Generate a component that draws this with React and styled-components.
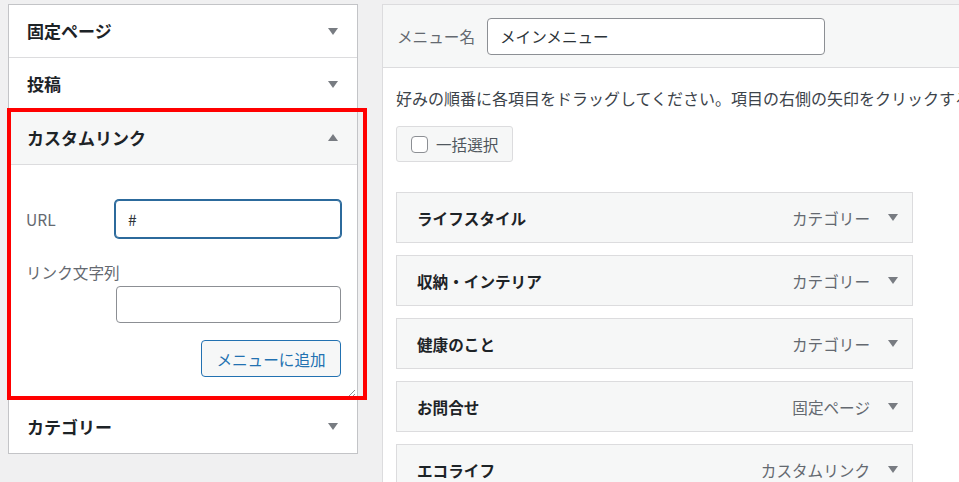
import { createGlobalStyle, styled } from "styled-components";

const leftSections = [
    { title: "固定ページ" },
    { title: "投稿" },
];

const menuItems = [
    { title: "ライフスタイル", type: "カテゴリー" },
    { title: "収納・インテリア", type: "カテゴリー" },
    { title: "健康のこと", type: "カテゴリー" },
    { title: "お問合せ", type: "固定ページ" },
    { title: "エコライフ", type: "カスタムリンク" },
];

const Arrow = ({ up }) => (
    <ArrowIcon viewBox="0 0 10 7" $up={up}>
        <path d="M0 0 L10 0 L5 7 Z" fill="currentColor" />
    </ArrowIcon>
);

const App = () => {
    return (
        <>
            <GlobalStyle />
            <Page>
                <LeftColumn>
                    <Accordion>
                        {leftSections.map((s) => (
                            <SectionHeader key={s.title}>
                                <SectionTitle>{s.title}</SectionTitle>
                                <Arrow />
                            </SectionHeader>
                        ))}
                        <SectionHeader $open>
                            <SectionTitle>カスタムリンク</SectionTitle>
                            <Arrow up />
                        </SectionHeader>
                        <SectionBody>
                            <FieldRow>
                                <FieldLabel>URL</FieldLabel>
                                <TextInput $focused defaultValue="#" />
                            </FieldRow>
                            <StackedField>
                                <FieldLabel>リンク文字列</FieldLabel>
                                <TextInput $indent />
                            </StackedField>
                            <ButtonRow>
                                <AddButton>メニューに追加</AddButton>
                            </ButtonRow>
                            <ResizeGrip viewBox="0 0 10 10">
                                <path d="M2 9 L9 2 M6 9 L9 6" stroke="#8c8f94" strokeWidth="1" />
                            </ResizeGrip>
                        </SectionBody>
                        <SectionHeader $last>
                            <SectionTitle>カテゴリー</SectionTitle>
                            <Arrow />
                        </SectionHeader>
                    </Accordion>
                    <Highlight />
                </LeftColumn>

                <RightColumn>
                    <MenuHeader>
                        <NameLabel>メニュー名</NameLabel>
                        <NameInput defaultValue="メインメニュー" />
                    </MenuHeader>
                    <MenuBody>
                        <Description>
                            好みの順番に各項目をドラッグしてください。項目の右側の矢印をクリックすると、追加の設定オプションが表示されます。
                        </Description>
                        <BulkButton>
                            <CheckBox />
                            一括選択
                        </BulkButton>
                        <ItemList>
                            {menuItems.map((item) => (
                                <MenuItem key={item.title}>
                                    <ItemTitle>{item.title}</ItemTitle>
                                    <ItemType>{item.type}</ItemType>
                                    <Arrow />
                                </MenuItem>
                            ))}
                        </ItemList>
                    </MenuBody>
                </RightColumn>
            </Page>
        </>
    );
};

export default App;

//styled
const GlobalStyle = createGlobalStyle`
    html, body {
        margin: 0;
        padding: 0;
        background: #f0f0f1;
    }
    body {
        font-family: "Noto Sans CJK JP", "Liberation Sans", sans-serif;
        color: #3c434a;
    }
    * {
        box-sizing: border-box;
    }
`;

const Page = styled.div`
    display: flex;
    gap: 24px;
    width: 959px;
    height: 482px;
    padding: 4px 0 0 8px;
    overflow: hidden;
`;

const LeftColumn = styled.div`
    position: relative;
    flex: 0 0 350px;
    align-self: flex-start;
`;

const Accordion = styled.div`
    background: #fff;
    border: 1px solid #c3c4c7;
`;

const SectionHeader = styled.div`
    display: flex;
    align-items: center;
    justify-content: space-between;
    height: ${(p) => (p.$open ? "54px" : "53px")};
    padding: 0 19px 0 18px;
    background: ${(p) => (p.$open ? "#f6f7f7" : "#fff")};
    border-bottom: ${(p) => (p.$last ? "none" : "1px solid #dcdcde")};
    color: #1d2327;
`;

const SectionTitle = styled.h3`
    margin: 0;
    font-size: 17px;
    font-weight: 700;
    line-height: 24px;
`;

const ArrowIcon = styled.svg`
    width: 10px;
    height: 7px;
    color: #787c82;
    flex: none;
    transform: ${(p) => (p.$up ? "rotate(180deg)" : "none")};
`;

const SectionBody = styled.div`
    position: relative;
    display: flex;
    flex-direction: column;
    padding: 35px 16px 22px 17px;
    border-bottom: 1px solid #dcdcde;
`;

const FieldRow = styled.div`
    display: flex;
    align-items: center;
`;

const FieldLabel = styled.label`
    flex: none;
    width: 89px;
    white-space: nowrap;
    font-size: 15.6px;
    line-height: 22px;
    color: #646970;
`;

const StackedField = styled.div`
    display: flex;
    flex-direction: column;
    margin-top: 23px;
    gap: 3px;
`;

const TextInput = styled.input`
    flex: ${(p) => (p.$indent ? "none" : "1")};
    width: ${(p) => (p.$indent ? "225px" : "auto")};
    align-self: ${(p) => (p.$indent ? "flex-end" : "auto")};
    height: ${(p) => (p.$focused ? "38px" : "37px")};
    padding: 0 12px;
    border: 1px solid ${(p) => (p.$focused ? "#2c6a9c" : "#8c8f94")};
    border-radius: 4px;
    box-shadow: ${(p) => (p.$focused ? "0 0 0 1px #2c6a9c" : "none")};
    outline: none;
    font-family: "Noto Sans CJK JP", "Liberation Sans", sans-serif;
    font-size: 15.6px;
    color: #2c3338;
    background: #fff;
`;

const ButtonRow = styled.div`
    display: flex;
    justify-content: flex-end;
    margin-top: 17px;
`;

const AddButton = styled.button`
    height: 37px;
    width: 140px;
    padding: 0 12px;
    background: #f6f7f7;
    border: 1px solid #2271b1;
    border-radius: 4px;
    color: #2271b1;
    font-family: "Noto Sans CJK JP", "Liberation Sans", sans-serif;
    font-size: 15.6px;
    line-height: 22px;
`;

const ResizeGrip = styled.svg`
    position: absolute;
    right: 1px;
    bottom: 1px;
    width: 10px;
    height: 10px;
`;

const Highlight = styled.div`
    position: absolute;
    left: -1px;
    top: 104px;
    width: 360px;
    height: 292px;
    border: 4px solid #ff0000;
    pointer-events: none;
`;

const RightColumn = styled.div`
    flex: 1;
    min-width: 0;
    display: flex;
    flex-direction: column;
    border-top: 1px solid #dcdcde;
    border-left: 1px solid #dcdcde;
    background: #fff;
    overflow: hidden;
`;

const MenuHeader = styled.div`
    flex: none;
    display: flex;
    align-items: center;
    height: 63px;
    padding: 0 14px;
    background: #f6f7f7;
    border-bottom: 1px solid #dcdcde;
`;

const NameLabel = styled.label`
    font-size: 15.6px;
    line-height: 22px;
    color: #646970;
    margin-right: 12px;
`;

const NameInput = styled.input`
    width: 338px;
    height: 37px;
    padding: 0 12px;
    border: 1px solid #8c8f94;
    border-radius: 4px;
    outline: none;
    font-family: "Noto Sans CJK JP", "Liberation Sans", sans-serif;
    font-size: 15.6px;
    color: #2c3338;
    background: #fff;
`;

const MenuBody = styled.div`
    flex: none;
    display: flex;
    flex-direction: column;
    align-items: flex-start;
    padding: 19px 0 0 13px;
`;

const Description = styled.p`
    margin: 0;
    font-size: 16px;
    line-height: 22px;
    color: #3c434a;
    white-space: nowrap;
`;

const BulkButton = styled.label`
    display: flex;
    align-items: center;
    gap: 8px;
    margin-top: 17px;
    height: 36px;
    padding: 0 14px;
    background: #f6f7f7;
    border: 1px solid #dcdcde;
    border-radius: 3px;
    font-size: 15.6px;
    color: #50575e;
`;

const CheckBox = styled.span`
    width: 17px;
    height: 17px;
    border: 1px solid #8c8f94;
    border-radius: 4px;
    background: #fff;
`;

const ItemList = styled.div`
    display: flex;
    flex-direction: column;
    gap: 12px;
    margin-top: 30px;
    width: 517px;
`;

const MenuItem = styled.div`
    display: flex;
    align-items: center;
    height: 51px;
    padding: 0 14px 0 20px;
    background: #f6f7f7;
    border: 1px solid #dcdcde;
    flex: none;
`;

const ItemTitle = styled.span`
    flex: 1;
    font-size: 15.6px;
    font-weight: 700;
    color: #1d2327;
`;

const ItemType = styled.span`
    font-size: 15.6px;
    color: #646970;
    margin-right: 18px;
`;
